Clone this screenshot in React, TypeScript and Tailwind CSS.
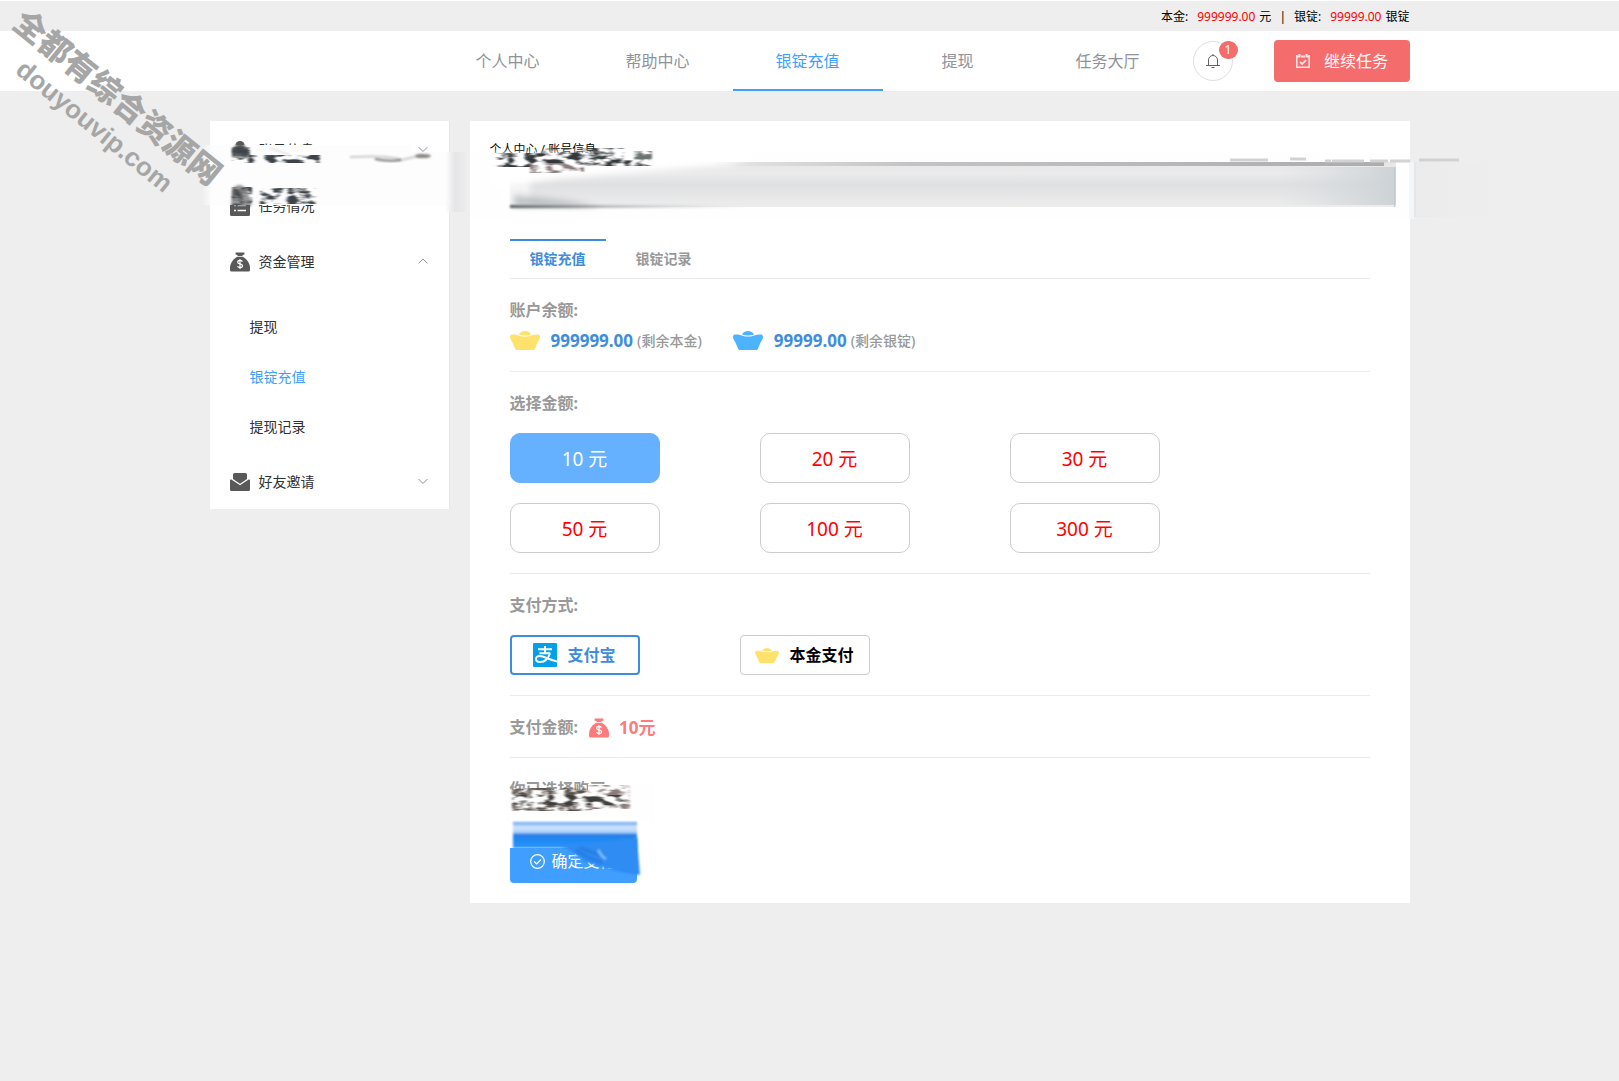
import { useState } from 'react';
import type { ReactNode } from 'react';
import clsx from 'clsx';

const navItems = ['个人中心', '帮助中心', '银锭充值', '提现', '任务大厅'];
const fundItems = ['提现', '银锭充值', '提现记录'];
const amounts = [10, 20, 30, 50, 100, 300];

function Chevron({ up = false }: { up?: boolean }) {
  return (
    <svg className="ml-auto h-3 w-3" viewBox="0 0 12 12" fill="none" stroke="#909399">
      <path d={up ? 'M1.5 7.5 6 3l4.5 4.5' : 'M1.5 3 6 7.5 10.5 3'} />
    </svg>
  );
}

function UserIcon() {
  return (
    <svg className="h-5 w-5" viewBox="0 0 20 20" fill="#595959">
      <circle cx="10" cy="5.5" r="4.5" />
      <path d="M1 19c0-5 3-8 9-8s9 3 9 8z" />
    </svg>
  );
}

function ListIcon() {
  return (
    <svg className="h-5 w-5" viewBox="0 0 20 20">
      <rect y="1" width="20" height="19" rx="1.5" fill="#595959" />
      <path d="M4 9.500h2m1.500 0H16M4 14.500h2m1.500 0H16" stroke="#fff" strokeWidth="1.400" />
    </svg>
  );
}

function MoneyBag({ color }: { color: string }) {
  return (
    <svg className="h-5 w-5 shrink-0" viewBox="0 0 20 20" fill={color}>
      <path d="M5.600.5h8.800v2.300H13L12.200 4H7.800L7 2.800H5.600z" />
      <path d="M7.200 4.800h5.600c4 2.200 7.200 6.700 7.200 11V18a1.500 1.500 0 0 1-1.500 1.500h-17A1.500 1.500 0 0 1 0 18v-2.200c0-4.300 3.200-8.800 7.200-11z" />
      <path
        d="M12.400 9.600c-.5-.8-1.300-1.200-2.300-1.200-1.400 0-2.400.7-2.400 1.800 0 2.400 4.800 1.100 4.800 3.600 0 1.100-1 1.800-2.400 1.800-1.200 0-2.100-.5-2.600-1.300M10 7v10"
        fill="none"
        stroke="#fff"
        strokeWidth="1.200"
      />
    </svg>
  );
}

function MailIcon() {
  return (
    <svg className="h-5 w-5" viewBox="0 0 20 20" fill="#595959">
      <path d="M4.500 1h11A1.500 1.500 0 0 1 17 2.500V7l-7 4.800L3 7V2.500A1.500 1.500 0 0 1 4.500 1z" />
      <path d="M0 8.500C0 7.500 1 7.300 1.700 7.700L10 13.300l8.300-5.600c.7-.4 1.700-.2 1.700.8v9a1.500 1.500 0 0 1-1.500 1.500h-17A1.500 1.500 0 0 1 0 17.500z" />
    </svg>
  );
}

function Ingot({ color, className }: { color: string; className: string }) {
  return (
    <svg className={className} viewBox="0 0 30 19" fill={color}>
      <path d="M9 3.600C10 1.300 12.200 0 15 0s5 1.300 6 3.600c-3.500 1.300-8.500 1.300-12 0z" />
      <path d="M2 3.600C4 3.300 6.500 3.500 8 4.200c3.500 1.700 10.500 1.700 14 0 1.500-.7 4-.9 6-.6 1.500.2 2.200 1.400 2 2.600-.2 1.700-1.400 3.300-2.200 4.900L25 17.500c-.5 1-.9 1.500-1.900 1.500H6.900c-1 0-1.400-.5-1.900-1.500L2.200 11.100C1.400 9.500.2 7.900 0 6.200-.2 5 .5 3.800 2 3.600z" />
    </svg>
  );
}

function AlipayIcon() {
  return (
    <svg className="h-6 w-6" viewBox="0 0 24 24" fill="none" stroke="#fff">
      <rect width="24" height="24" rx="1" fill="#06a0ea" stroke="none" />
      <path d="M5 6.200h14M12 3v7M6.500 10.200h10.700" strokeWidth="2" />
      <path d="M17 10.200c-1.500 4.500-5 8.800-9.700 8.800-2.600 0-4.300-1.300-4.300-3.100 0-1.800 1.700-3 3.900-3 4.300 0 9.100 4.100 17.600 5.600" strokeWidth="2" />
    </svg>
  );
}

function BellIcon() {
  return (
    <svg className="h-4 w-4" viewBox="0 0 16 16" fill="none" stroke="#606266">
      <path d="M3.500 12.500V7a4.500 4.500 0 0 1 9 0v5.500M1 12.500h14M8 2.500V1M6.500 14.500h3" />
    </svg>
  );
}

function TaskIcon() {
  return (
    <svg className="h-4 w-4" viewBox="0 0 16 16" fill="none" stroke="#fff" opacity="0.800">
      <path d="M1.800 2v12.200h12.400V2" strokeWidth="1.600" />
      <path d="M1 3.500h3.500M6 3.500h4M11.500 3.500H15M4.500 1v3.500M11.500 1v3.500" strokeWidth="2" />
      <path d="m5 9 2.200 2 4-3.800" strokeWidth="1.800" />
    </svg>
  );
}

// Shared filters for the smudged areas that hide account details
function SmudgeFilters() {
  return (
    <svg className="absolute h-0 w-0" aria-hidden="true">
      <defs>
        <filter id="soft" x="-20%" y="-40%" width="140%" height="180%">
          <feGaussianBlur stdDeviation="3" />
        </filter>
        <filter id="thin" x="-20%" y="-100%" width="140%" height="300%">
          <feGaussianBlur stdDeviation="1" />
        </filter>
        <filter id="grain" x="-10%" y="-30%" width="120%" height="160%">
          <feTurbulence type="fractalNoise" baseFrequency="0.090 0.180" numOctaves="3" seed="8" />
          <feColorMatrix values="0 0 0 0 0  0 0 0 0 0  0 0 0 0 0  4 0 0 0 -1.600" />
          <feComposite in="SourceGraphic" operator="in" />
          <feGaussianBlur stdDeviation="1 0.700" />
        </filter>
      </defs>
    </svg>
  );
}

function SidebarSmudge() {
  return (
    <svg
      className="pointer-events-none absolute top-0 left-0 overflow-visible"
      width="240"
      height="100"
      viewBox="0 0 240 100"
      aria-hidden="true"
    >
      <defs>
        <linearGradient id="leftHaze">
          <stop offset="0" stopColor="#fcfcfc" stopOpacity="0" />
          <stop offset="1" stopColor="#fcfcfc" />
        </linearGradient>
        <linearGradient id="gapHaze">
          <stop offset="0" stopColor="#fbfbfb" />
          <stop offset="0.400" stopColor="#e3e2e4" />
          <stop offset="1" stopColor="#f0f0f1" />
        </linearGradient>
      </defs>
      <rect x="-8" y="24" width="10" height="60" fill="url(#leftHaze)" />
      <rect x="2" y="24" width="200" height="60" fill="#fdfdfd" />
      <rect x="202" y="31" width="38" height="53" fill="#fdfdfd" />
      <rect x="236" y="31" width="24" height="60" fill="url(#gapHaze)" opacity="0.800" />
      <path d="M22 29q8-13 16 0v7H22z" fill="#595959" filter="url(#thin)" />
      <g filter="url(#grain)" fill="#3d434a">
        <rect x="22" y="26" width="18" height="16" />
        <rect x="22" y="34" width="88" height="8" />
        <rect x="22" y="66" width="20" height="18" />
        <rect x="50" y="67" width="56" height="16" />
      </g>
      <path d="M60 27l20 7" stroke="#ccc" filter="url(#thin)" />
      <path d="M22 68q8-8 14 0l5 12v6H21z" fill="#555" opacity="0.600" filter="url(#thin)" />
      <path d="M140 36q40-2 52 3l20-5" fill="none" stroke="#999" strokeWidth="2" opacity="0.500" filter="url(#thin)" />
      <path d="M165 38q14 3 26 1" fill="none" stroke="#777" strokeWidth="2" filter="url(#thin)" />
      <ellipse cx="213" cy="35" rx="8" ry="2" fill="#8a8280" filter="url(#thin)" />
    </svg>
  );
}

function BannerSmudge() {
  return (
    <svg
      className="pointer-events-none absolute top-0 left-0 overflow-visible"
      width="940"
      height="100"
      viewBox="0 0 940 100"
      aria-hidden="true"
    >
      <defs>
        <linearGradient id="banner" x1="0" y1="0" x2="0" y2="1">
          <stop offset="0" stopColor="#e6e6e7" />
          <stop offset="0.250" stopColor="#ebebec" />
          <stop offset="0.500" stopColor="#dfe0e2" />
          <stop offset="1" stopColor="#ededed" />
        </linearGradient>
        <linearGradient id="topLine">
          <stop offset="0" stopColor="#c4c2c4" stopOpacity="0" />
          <stop offset="0.300" stopColor="#c4c2c4" />
          <stop offset="1" stopColor="#acacae" />
        </linearGradient>
        <linearGradient id="darkFade">
          <stop offset="0" stopColor="#55585c" />
          <stop offset="0.400" stopColor="#b9bbbd" />
          <stop offset="1" stopColor="#dedede" stopOpacity="0" />
        </linearGradient>
        <linearGradient id="edgeFade">
          <stop offset="0" stopColor="#d5dade" stopOpacity="0" />
          <stop offset="1" stopColor="#ccd2d5" />
        </linearGradient>
        <linearGradient id="rightHaze">
          <stop offset="0" stopColor="#ebebeb" />
          <stop offset="1" stopColor="#eee" stopOpacity="0" />
        </linearGradient>
      </defs>
      <rect x="0" y="32" width="940" height="66" fill="#fefefe" />
      <rect x="939" y="41" width="5" height="57" fill="#f4f6f7" />
      <rect x="944" y="41" width="2" height="55" fill="#e4e8ea" />
      <rect x="946" y="41" width="110" height="55" fill="url(#rightHaze)" />
      <rect x="40" y="41" width="886" height="45" fill="url(#banner)" />
      <path d="M18 32H300l-40 12-110 8-60 5-70 10z" fill="#fff" filter="url(#soft)" />
      <path d="M30 50H60V86H30z" fill="#fff" opacity="0.600" filter="url(#soft)" />
      <rect x="240" y="41" width="674" height="4" fill="url(#topLine)" />
      <rect x="40" y="84" width="240" height="3" fill="url(#darkFade)" filter="url(#thin)" />
      <path d="M44 74 100 80 130 86H44z" fill="#8d9398" opacity="0.500" filter="url(#soft)" />
      <rect x="810" y="46" width="116" height="38" fill="url(#edgeFade)" />
      <rect x="924" y="46" width="1" height="40" fill="#c4cacd" />
      <path d="M890 45h40" stroke="#a5a5a7" strokeWidth="3" filter="url(#thin)" />
      <path d="M760 39h38M820 38h16M855 40h6M862 40h32M900 40h18M920 40h20M949 39h40" stroke="#d2d2d2" strokeWidth="3" />
      <g filter="url(#grain)" fill="#33373a">
        <rect x="24" y="32" width="60" height="14" />
        <rect x="70" y="27" width="84" height="16" />
        <rect x="60" y="42" width="54" height="10" fill="#8a7a7c" />
        <rect x="110" y="39" width="72" height="6" />
        <rect x="164" y="30" width="18" height="12" fill="#6a7472" />
      </g>
    </svg>
  );
}

function ConfirmSmudge() {
  return (
    <svg
      className="pointer-events-none absolute top-0 left-0 overflow-visible"
      width="200"
      height="125"
      viewBox="0 0 200 125"
      aria-hidden="true"
    >
      <defs>
        <linearGradient id="blueSmear" x1="0" y1="0" x2="0" y2="1">
          <stop offset="0" stopColor="#5d9bee" />
          <stop offset="0.080" stopColor="#8fc0f8" />
          <stop offset="0.200" stopColor="#d2e6ff" />
          <stop offset="0.400" stopColor="#a8cffb" />
          <stop offset="0.480" stopColor="#2c80e4" />
          <stop offset="0.700" stopColor="#1d8af5" />
          <stop offset="1" stopColor="#2f93fa" />
        </linearGradient>
      </defs>
      <path d="M-4 32H78V26H144V64H-4z" fill="#fefefe" />
      <g filter="url(#grain)">
        <rect x="2" y="30" width="80" height="23" fill="#5a504c" />
        <rect x="78" y="27" width="42" height="24" fill="#8b7b7a" />
        <rect x="4" y="37" width="112" height="10" fill="#3c3c3a" />
      </g>
      <rect x="0" y="60" width="140" height="30" fill="#fff" />
      <rect x="3" y="64" width="124" height="26" fill="url(#blueSmear)" filter="url(#thin)" />
      <rect x="0" y="90" width="52" height="4" fill="#409eff" />
      <path d="M50 88 127 80l3 37q-18-2-38-8l-12-4h-4l-18-14z" fill="#2f8cf2" filter="url(#thin)" />
      <path d="M66 92q12 9 26 12M70 90q16 6 24 8" fill="none" stroke="#1c6fd6" strokeWidth="3" opacity="0.500" filter="url(#thin)" />
      <path d="M88 92q4 7 8 9" fill="none" stroke="#7fbcff" strokeWidth="3" filter="url(#thin)" />
    </svg>
  );
}

function MenuRow({ icon, label, arrow }: { icon: ReactNode; label: string; arrow?: ReactNode }) {
  return (
    <button type="button" className="flex h-14 w-full items-center gap-[9px] px-5 pt-px text-sm text-[#303133]">
      {icon}
      <span>{label}</span>
      {arrow}
    </button>
  );
}

function Section({ title, children }: { title: string; children: ReactNode }) {
  return (
    <section className="border-b border-[#ebebeb] pt-[21px] pb-5">
      <h2 className="text-base leading-[21px] font-bold text-[#999]">{title}</h2>
      {children}
    </section>
  );
}

export default function App() {
  const [amount, setAmount] = useState(10);
  const [method, setMethod] = useState('alipay');

  return (
    <div className="relative min-h-screen overflow-hidden bg-[#eee] font-['Noto_Sans','Noto_Sans_CJK_SC',sans-serif]">
      <SmudgeFilters />

      {/* Balance bar */}
      <div className="border-t border-white">
        <div className="mx-auto flex h-[30px] max-w-[1200px] items-center justify-end pt-px text-xs text-black">
          <span>本金:</span>
          <span className="ml-[9px] text-[#f00]">999999.00</span>
          <span className="ml-1">元</span>
          <span className="mx-2">|</span>
          <span>银锭:</span>
          <span className="ml-[9px] text-[#f00]">99999.00</span>
          <span className="ml-1">银锭</span>
        </div>
      </div>

      {/* Header */}
      <header className="bg-white">
        <div className="mx-auto flex h-[60px] max-w-[1200px] items-center justify-end">
          <nav className="flex">
            {navItems.map((item) => (
              <a
                key={item}
                href="#"
                className={clsx(
                  'flex h-[60px] w-[150px] items-center justify-center border-b-2 pt-[2px] text-base',
                  item === '银锭充值' ? 'border-[#409eff] text-[#409eff]' : 'border-transparent text-[#909399]'
                )}
              >
                {item}
              </a>
            ))}
          </nav>
          <button
            type="button"
            aria-label="消息"
            className="relative ml-[10px] flex h-10 w-10 items-center justify-center rounded-full border border-[#dcdfe6]"
          >
            <BellIcon />
            <span className="absolute -top-px -right-[6px] flex h-[18px] min-w-[19px] items-center justify-center rounded-full bg-[#f56c6c] text-xs text-white">
              1
            </span>
          </button>
          <button
            type="button"
            className="ml-[41px] flex h-[42px] w-[136px] items-center justify-center gap-[13px] rounded bg-[#f56c6c] text-base text-white"
          >
            <TaskIcon />
            继续任务
          </button>
        </div>
      </header>

      <div className="mx-auto flex max-w-[1200px] items-start gap-5 pt-[30px]">
        {/* Sidebar */}
        <aside className="relative w-60 shrink-0 border-r border-[#e6e6e6] bg-white">
          <MenuRow icon={<UserIcon />} label="账号信息" arrow={<Chevron />} />
          <MenuRow icon={<ListIcon />} label="任务情况" />
          <MenuRow icon={<MoneyBag color="#595959" />} label="资金管理" arrow={<Chevron up />} />
          <ul className="pt-[14px]">
            {fundItems.map((item) => (
              <li key={item}>
                <a
                  href="#"
                  className={clsx(
                    'flex h-[50px] items-center pb-[2px] pl-10 text-sm',
                    item === '银锭充值' ? 'text-[#409eff]' : 'text-[#303133]'
                  )}
                >
                  {item}
                </a>
              </li>
            ))}
          </ul>
          <MenuRow icon={<MailIcon />} label="好友邀请" arrow={<Chevron />} />
          <SidebarSmudge />
        </aside>

        {/* Recharge panel */}
        <main className="relative min-w-0 flex-1 bg-white pb-5">
          <div className="h-[86px] px-5 pt-[21px] text-xs text-black">个人中心 / 账号信息</div>
          <BannerSmudge />

          <div className="px-10 pt-8">
            <div role="tablist" className="flex gap-[10px] border-b border-[#ebebeb] text-sm font-bold">
              <button
                type="button"
                role="tab"
                aria-selected="true"
                className="h-[39px] border-t-2 border-[#3e8ddd] px-5 pb-[2px] text-[#3e8ddd]"
              >
                银锭充值
              </button>
              <button
                type="button"
                role="tab"
                aria-selected="false"
                className="h-[39px] border-t-2 border-transparent px-5 pb-[2px] text-[#999]"
              >
                银锭记录
              </button>
            </div>

            <Section title="账户余额:">
              <div className="mt-[9px] flex h-[21px] items-center font-bold">
                <Ingot color="#ffe26b" className="h-[19px] w-[30px]" />
                <span className="ml-[11px] text-[17px] text-[#3e8ddd]">999999.00</span>
                <span className="ml-1 text-sm font-medium text-[#999]">(剩余本金)</span>
                <Ingot color="#4eb3ff" className="ml-[31px] h-[19px] w-[30px]" />
                <span className="ml-[11px] text-[17px] text-[#3e8ddd]">99999.00</span>
                <span className="ml-1 text-sm font-medium text-[#999]">(剩余银锭)</span>
              </div>
            </Section>

            <Section title="选择金额:">
              <div className="mt-[19px] grid grid-cols-[repeat(3,150px)] gap-x-[100px] gap-y-5">
                {amounts.map((value) => (
                  <button
                    key={value}
                    type="button"
                    onClick={() => setAmount(value)}
                    className={clsx(
                      'h-[50px] rounded-[10px] border pt-[2px] text-[19px]',
                      value === amount ? 'border-[#66b1ff] bg-[#66b1ff] text-white' : 'border-[#ccc] bg-white text-[#f00]'
                    )}
                  >
                    {value} 元
                  </button>
                ))}
              </div>
            </Section>

            <Section title="支付方式:">
              <div className="mt-[19px] flex gap-[100px] text-base font-bold">
                <button
                  type="button"
                  onClick={() => setMethod('alipay')}
                  className={clsx(
                    'flex h-10 w-[130px] items-center justify-center gap-[10px] rounded',
                    method === 'alipay' ? 'border-2 border-[#3e8ddd] text-[#3e8ddd]' : 'border border-[#ccc] text-black'
                  )}
                >
                  <AlipayIcon />
                  支付宝
                </button>
                <button
                  type="button"
                  onClick={() => setMethod('balance')}
                  className={clsx(
                    'flex h-10 w-[130px] items-center justify-center gap-[10px] rounded',
                    method === 'balance' ? 'border-2 border-[#3e8ddd] text-[#3e8ddd]' : 'border border-[#ccc] text-black'
                  )}
                >
                  <Ingot color="#ffe26b" className="h-[15px] w-6" />
                  本金支付
                </button>
              </div>
            </Section>

            <section className="flex items-center border-b border-[#ebebeb] pt-[21px] pb-[19px] text-base leading-[21px] font-bold">
              <h2 className="text-[#999]">支付金额:</h2>
              <span className="ml-[11px] flex items-center gap-[10px] text-[17px] text-[#ff7b7b]">
                <MoneyBag color="#ff7b7b" />
                {amount}元
              </span>
            </section>

            <section className="relative pt-[21px]">
              <h2 className="text-base leading-[21px] font-bold text-[#999]">你已选择购买</h2>
              <button
                type="button"
                className="mt-[39px] flex h-11 w-[127px] items-center justify-center gap-[6px] rounded bg-[#409eff] text-base text-white"
              >
                <svg className="h-[15px] w-[15px]" viewBox="0 0 15 15" fill="none" stroke="#fff" strokeWidth="1.200">
                  <circle cx="7.500" cy="7.500" r="6.800" />
                  <path d="m4.200 7.500 2.500 2.500 4.300-4.500" />
                </svg>
                确定支付
              </button>
              <ConfirmSmudge />
            </section>
          </div>
        </main>
      </div>

      {/* Watermark */}
      <div className="pointer-events-none absolute -top-[4px] -left-[44px] z-10 flex w-[300px] rotate-[39deg] flex-col items-center py-20 font-['Liberation_Sans','Noto_Sans_CJK_SC',sans-serif] font-black whitespace-nowrap text-[#a6a6a6]">
        <span className="text-[32px] leading-9">全都有综合资源网</span>
        <span className="text-[26px] leading-9">douyouvip.com</span>
      </div>
    </div>
  );
}
